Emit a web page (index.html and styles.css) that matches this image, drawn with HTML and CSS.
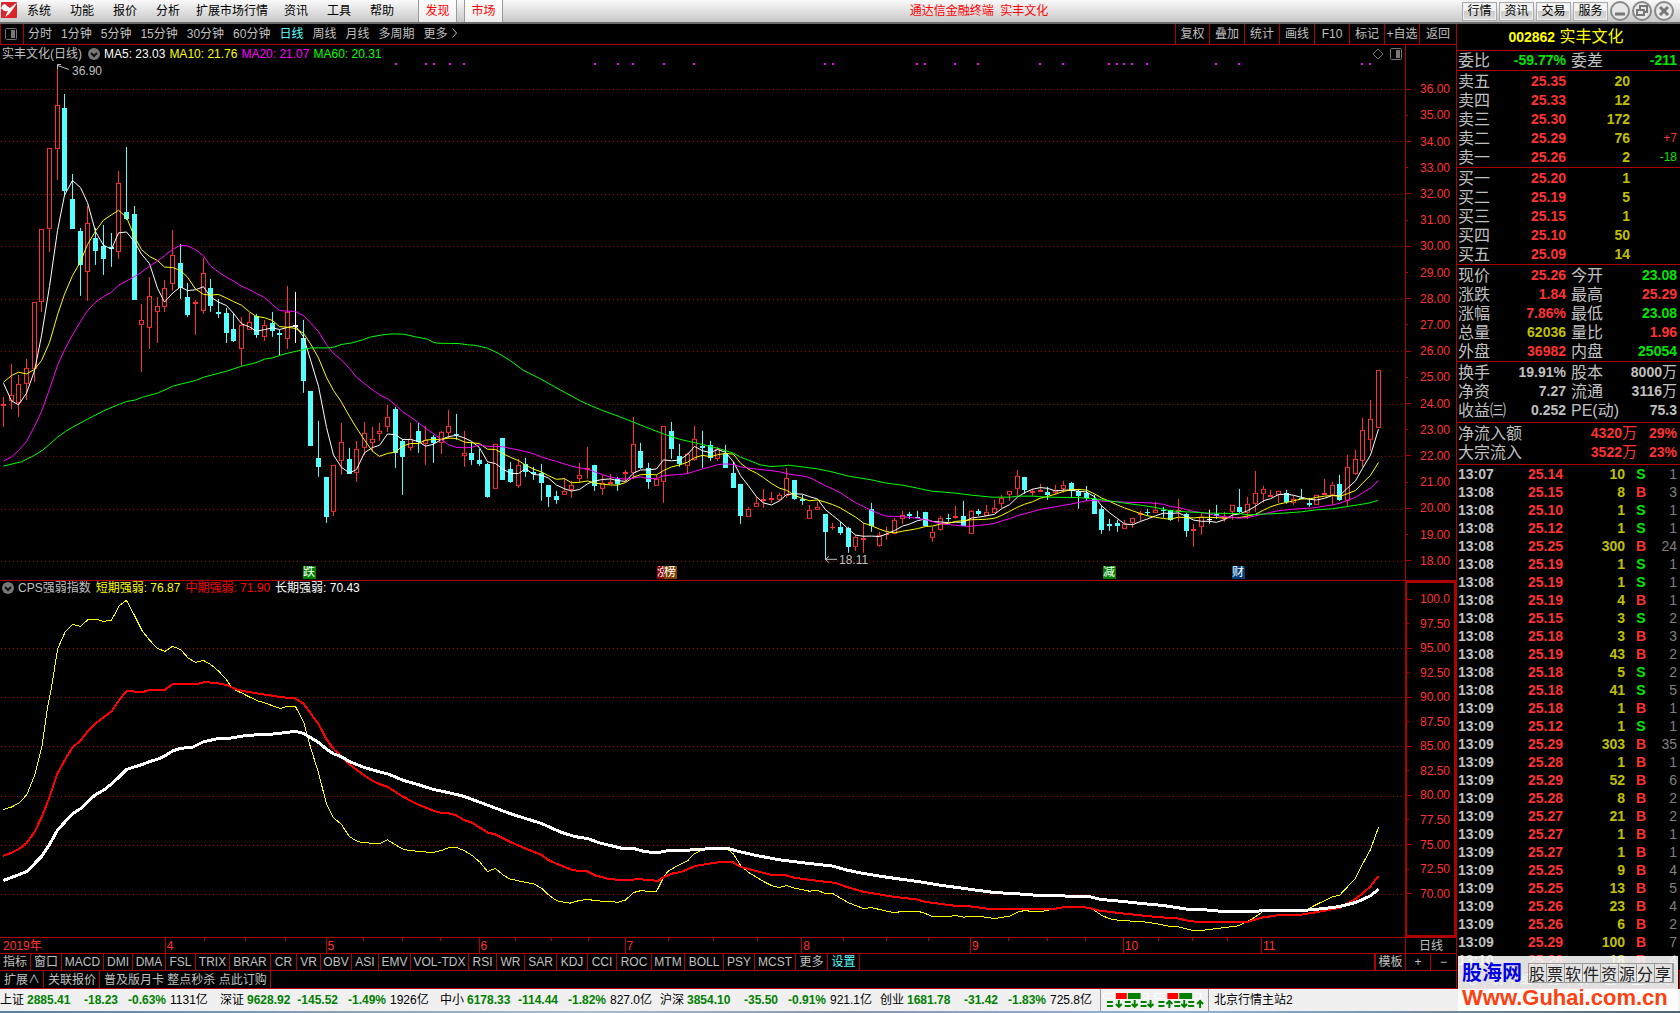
FILE: index.html
```html
<!DOCTYPE html>
<html lang="zh-CN">
<head>
<meta charset="utf-8">
<title>通达信金融终端 实丰文化</title>
<link rel="stylesheet" href="styles.css">
</head>
<body>
<div class="app">
  <header class="titlebar">
    <nav class="menu">
      <svg class="logo" viewBox="0 0 17 18"><rect x="1" y="2" width="16" height="16" rx="1" fill="#d8262c"/><path d="M1 9 Q2 4 5 4 L7 6 L10 8 L15 4 L17 3 L13 9 Q10 14 5 17 L8 11 Q4 12 2 9Z" fill="#fff"/></svg>
      <button>系统</button><button>功能</button><button>报价</button><button>分析</button><button>扩展市场行情</button><button>资讯</button><button>工具</button><button>帮助</button>
      <button class="hot">发现</button><button class="hot hot-last">市场</button>
    </nav>
    <h1 class="app-title">通达信金融终端&nbsp; 实丰文化</h1>
    <div class="window-tools">
      <button class="tool">行情</button><button class="tool">资讯</button><button class="tool">交易</button><button class="tool">服务</button>
      <button class="round" aria-label="最小化"><svg viewBox="0 0 20 20"><circle cx="10" cy="10" r="9"/><path d="M5 13h10" stroke-width="3"/></svg></button>
      <button class="round" aria-label="还原"><svg viewBox="0 0 20 20"><circle cx="10" cy="10" r="9"/><path d="M8 9V5h7v6h-3M5 9h7v5H5z" stroke-width="2"/></svg></button>
      <button class="round" aria-label="关闭"><svg viewBox="0 0 20 20"><circle cx="10" cy="10" r="9"/><path d="M6 6l8 8M14 6l-8 8" stroke-width="3"/></svg></button>
    </div>
  </header>

  <div class="workspace">
    <main class="charts">
      <div class="toolbar">
        <button class="pane-toggle" aria-label="侧栏"><svg viewBox="0 0 12 12"><rect x="0.5" y="0.5" width="11" height="11" rx="1" fill="none" stroke="#777"/><rect x="6" y="2" width="4" height="8" fill="#777"/></svg></button>
        <div class="periods">
          <button>分时</button><button>1分钟</button><button>5分钟</button><button>15分钟</button><button>30分钟</button><button>60分钟</button><button class="active">日线</button><button>周线</button><button>月线</button><button>多周期</button><button>更多 <svg class="chev" viewBox="0 0 5 10"><path d="M0.5 0.5L4.5 5L0.5 9.5" fill="none" stroke="#c0c0c0"/></svg></button>
        </div>
        <div class="chart-tools">
          <button>复权</button><button>叠加</button><button>统计</button><button>画线</button><button>F10</button><button>标记</button><button>+自选</button><button>返回</button>
        </div>
      </div>

      <section class="panel panel-main">
        <div class="plot">
          <svg id="candles" viewBox="0 0 1405 535" preserveAspectRatio="none"></svg>
          <p class="legend"><span>实丰文化(日线)</span><svg class="drop" viewBox="0 0 12 12"><circle cx="6" cy="6" r="6" fill="#777"/><path d="M3 5l3 3 3-3" fill="none" stroke="#111" stroke-width="2"/></svg><span class="white">MA5: 23.03</span><span class="yellow">MA10: 21.76</span><span class="magenta">MA20: 21.07</span><span class="lime">MA60: 20.31</span></p>
          <svg class="corner" viewBox="0 0 30 12"><path d="M1 6l5-5 5 5-5 5z" fill="none" stroke="#777"/><rect x="18.5" y="0.5" width="11" height="11" rx="1" fill="none" stroke="#777"/><rect x="24" y="2" width="4" height="8" fill="#777"/></svg>
          <span class="note note-high">36.90</span>
          <span class="note note-low">18.11</span>
          <span class="badge fall">跌</span><span class="badge rise">涨</span><span class="badge rank">榜</span><span class="badge cut">减</span><span class="badge fin">财</span>
        </div>
        <ol class="axis axis-price"><li>36.00</li><li>35.00</li><li>34.00</li><li>33.00</li><li>32.00</li><li>31.00</li><li>30.00</li><li>29.00</li><li>28.00</li><li>27.00</li><li>26.00</li><li>25.00</li><li>24.00</li><li>23.00</li><li>22.00</li><li>21.00</li><li>20.00</li><li>19.00</li><li>18.00</li></ol>
      </section>

      <section class="panel panel-sub">
        <div class="plot">
          <svg id="strength" viewBox="0 0 1405 356" preserveAspectRatio="none"></svg>
          <p class="legend legend-sub"><svg class="drop" viewBox="0 0 12 12"><circle cx="6" cy="6" r="6" fill="#777"/><path d="M3 5l3 3 3-3" fill="none" stroke="#111" stroke-width="2"/></svg><span>CPS强弱指数</span><span class="yellow">短期强弱: 76.87</span><span class="red">中期强弱: 71.90</span><span class="white">长期强弱: 70.43</span></p>
        </div>
        <ol class="axis axis-index"><li>100.0</li><li>97.50</li><li>95.00</li><li>92.50</li><li>90.00</li><li>87.50</li><li>85.00</li><li>82.50</li><li>80.00</li><li>77.50</li><li>75.00</li><li>72.50</li><li>70.00</li></ol>
      </section>

      <div class="dates">
        <div class="months">
          <svg id="minor" viewBox="0 0 1405 3" preserveAspectRatio="none"></svg>
          <span>2019年</span><span>4</span><span>5</span><span>6</span><span>7</span><span>8</span><span>9</span><span>10</span><span>11</span>
        </div>
        <div class="period-name">日线</div>
      </div>

      <div class="indicators">
        <div class="indicator-tabs">
          <button>指标</button><button>窗口</button><button>MACD</button><button>DMI</button><button>DMA</button><button>FSL</button><button>TRIX</button><button>BRAR</button><button>CR</button><button>VR</button><button>OBV</button><button>ASI</button><button>EMV</button><button>VOL-TDX</button><button>RSI</button><button>WR</button><button>SAR</button><button>KDJ</button><button>CCI</button><button>ROC</button><button>MTM</button><button>BOLL</button><button>PSY</button><button>MCST</button><button>更多</button><button class="active">设置</button>
        </div>
        <div class="zoomers"><button>模板</button><button>+</button><button>−</button></div>
      </div>
      <div class="extras"><button>扩展∧</button><button>关联报价</button><button>普及版月卡 整点秒杀 点此订购</button></div>
    </main>

    <aside class="quote">
      <h2 class="stock"><b>002862</b> 实丰文化</h2>
      <table class="stats ratio"><colgroup><col class="c-label"><col class="c-val"><col class="c-label2"><col></colgroup>
        <tr><th>委比</th><td class="g">-59.77%</td><th>委差</th><td class="g">-211</td></tr></table>
      <table class="book"><colgroup><col class="c-label"><col class="c-val"><col class="c-vol"><col></colgroup>
        <tr><th>卖五</th><td>25.35</td><td>20</td><td></td></tr>
        <tr><th>卖四</th><td>25.33</td><td>12</td><td></td></tr>
        <tr><th>卖三</th><td>25.30</td><td>172</td><td></td></tr>
        <tr><th>卖二</th><td>25.29</td><td>76</td><td class="delta r">+7</td></tr>
        <tr><th>卖一</th><td>25.26</td><td>2</td><td class="delta g">-18</td></tr></table>
      <table class="book"><colgroup><col class="c-label"><col class="c-val"><col class="c-vol"><col></colgroup>
        <tr><th>买一</th><td>25.20</td><td>1</td><td></td></tr>
        <tr><th>买二</th><td>25.19</td><td>5</td><td></td></tr>
        <tr><th>买三</th><td>25.15</td><td>1</td><td></td></tr>
        <tr><th>买四</th><td>25.10</td><td>50</td><td></td></tr>
        <tr><th>买五</th><td>25.09</td><td>14</td><td></td></tr></table>
      <table class="stats"><colgroup><col class="c-label"><col class="c-val"><col class="c-label2"><col></colgroup>
        <tr><th>现价</th><td class="r">25.26</td><th>今开</th><td class="g">23.08</td></tr>
        <tr><th>涨跌</th><td class="r">1.84</td><th>最高</th><td class="r">25.29</td></tr>
        <tr><th>涨幅</th><td class="r">7.86%</td><th>最低</th><td class="g">23.08</td></tr>
        <tr><th>总量</th><td class="y">62036</td><th>量比</th><td class="r">1.96</td></tr>
        <tr><th>外盘</th><td class="r">36982</td><th>内盘</th><td class="g">25054</td></tr></table>
      <table class="stats roomy"><colgroup><col class="c-label"><col class="c-val"><col class="c-label2"><col></colgroup>
        <tr><th>换手</th><td>19.91%</td><th>股本</th><td>8000<i>万</i></td></tr>
        <tr><th>净资</th><td>7.27</td><th>流通</th><td>3116<i>万</i></td></tr>
        <tr><th>收益㈢</th><td>0.252</td><th>PE(动)</th><td>75.3</td></tr></table>
      <table class="flow roomy"><colgroup><col class="c-flow"><col class="c-amount"><col></colgroup>
        <tr><th>净流入额</th><td>4320<i>万</i></td><td>29%</td></tr>
        <tr><th>大宗流入</th><td>3522<i>万</i></td><td>23%</td></tr></table>
      <div class="tape"><table class="ticks"><colgroup><col class="t-time"><col class="t-price"><col class="t-vol"><col class="t-side"><col></colgroup><tbody id="ticks"></tbody></table></div>
      <div class="side-tabs"><button>笔</button><button>价</button><button>细</button><button>势</button><button>联</button><button>值</button><button>主</button><button>筹</button></div>
    </aside>
  </div>

  <footer class="status">
    <div class="index"><span>上证</span><b>2885.41</b><b>-18.23</b><b>-0.63%</b><span>1131亿</span></div>
    <div class="index"><span>深证</span><b>9628.92</b><b>-145.52</b><b>-1.49%</b><span>1926亿</span></div>
    <div class="index"><span>中小</span><b>6178.33</b><b>-114.44</b><b>-1.82%</b><span>827.0亿</span></div>
    <div class="index"><span>沪深</span><b>3854.10</b><b>-35.50</b><b>-0.91%</b><span>921.1亿</span></div>
    <div class="index"><span>创业</span><b>1681.78</b><b>-31.42</b><b>-1.83%</b><span>725.8亿</span></div>
    <svg class="meters" viewBox="0 0 108 20"><g fill="none" stroke="#fff"><path d="M2.5 3.5h45v5h-45zM54.5 3.5h46v5h-46z"/></g><path d="M15 3h11v6H15zM67 3h11v6H67z" fill="#f00"/><path d="M27 3h13v6H27zM79 3h13v6H79z" fill="#008000"/>
      <g id="arrows" fill="none" stroke="#008000" stroke-width="2"><path d="M6 12h6M6 16h6M24 12h6M24 16h6M40 12h6M40 16h6M58 12h6M58 16h6M74 12h6M74 16h6M88 12h6M88 16h6"/><path d="M18 10v8M15 14l3 3 3-3M34 10v8M31 14l3 3 3-3M50 10v8M47 14l3 3 3-3M69 18v-8M66 14l3-3 3 3M84 10v8M81 14l3 3 3-3M100 18v-8M97 14l3-3 3 3"/></g></svg>
    <span class="host">北京行情主站2</span>
  </footer>
  <div class="taskbar"></div>

  <div class="brand">
    <strong class="brand-name">股海网</strong>
    <span class="brand-line"><i>股</i><i>票</i><i>软</i><i>件</i><i>资</i><i>源</i><i>分</i><i>享</i></span>
    <a class="brand-url" href="#">Www.Guhai.com.cn</a>
  </div>
</div>
<script src="chart.js"></script>
</body>
</html>
```
FILE: styles.css
```css
* { box-sizing: border-box; }
body {
  margin: 0;
  background: #000;
  color: #c0c0c0;
  font: 12px/16px "Liberation Sans", "Noto Sans CJK SC", sans-serif;
}
button {
  margin: 0;
  padding: 0;
  border: 0;
  background: none;
  color: inherit;
  font: inherit;
  white-space: nowrap;
}
svg { display: block; }
p, h1, h2, ol { margin: 0; padding: 0; font-weight: normal; list-style: none; }
.white { color: #fff; }
.yellow { color: #ff0; }
.magenta { color: #f0f; }
.lime { color: #0f0; }
.red { color: #f00; }

.app { position: relative; display: flex; flex-direction: column; height: 100vh; min-height: 900px; overflow: hidden; }

/* title bar */
.titlebar {
  display: grid;
  grid-template-columns: 501px 1fr 223px;
  height: 24px;
  border-bottom: 2px solid #6c6c6c;
  background: linear-gradient(#fafafa, #c8c8c8);
  color: #000;
}
.menu { display: grid; grid-template-columns: 17px 43px 43px 43px 40px 88px 43px 43px 58px 46px 39px; }
.logo { width: 17px; height: 18px; }
.menu button { padding-left: 10px; text-align: left; }
.menu .hot {
  padding: 0;
  margin-right: 7px;
  border: 1px solid #999;
  border-width: 0 1px;
  background: linear-gradient(#fff, #eee);
  color: #f00;
  text-align: center;
}
.menu .hot-last { margin-right: 0; }
.app-title { color: #f00; font-size: 12px; line-height: 22px; text-align: center; }
.window-tools { display: flex; align-items: center; gap: 2px; padding-left: 5px; }
.tool {
  width: 35px;
  height: 19px;
  border: 1px solid #aaa;
  outline: 1px solid #eee;
  outline-offset: -2px;
  background: linear-gradient(#f4f4f4 50%, #ccc 50%, #ddd);
}
.round { width: 20px; height: 20px; }
.round svg { width: 20px; height: 20px; fill: #e8e8e8; stroke: #888; stroke-width: 2; }
.round path { fill: none; stroke: #777; }

.workspace { display: flex; flex: 1; min-height: 0; }
.charts { display: flex; flex: 1; flex-direction: column; min-width: 0; }

/* period toolbar */
.toolbar { display: flex; height: 21px; border-bottom: 1px solid #b00000; }
.toolbar button { line-height: 20px; }
.pane-toggle { width: 24px; padding-left: 4px; border: 1px solid #b00000; border-width: 0 1px; }
.pane-toggle svg { width: 12px; height: 12px; }
.periods { display: flex; flex: 1; gap: 9px; padding-left: 4px; }
.chev { display: inline-block; width: 5px; height: 10px; margin-left: 1px; }
.active { color: #54ffff; }
.chart-tools { display: grid; grid-template-columns: 34px repeat(6, 35px) 37px; }
.chart-tools button { border-left: 1px solid #b00000; }

/* chart panels */
.panel { display: flex; min-height: 0; border-bottom: 1px solid #b00000; }
.panel-main { flex: 536 1 0; }
.panel-sub { flex: 357 1 0; }
.plot { position: relative; flex: 1; min-width: 0; }
.plot > svg:first-child { position: absolute; width: 100%; height: 100%; shape-rendering: crispEdges; }
.legend { position: absolute; top: 1px; left: 2px; display: flex; align-items: center; gap: 4px; }
.legend-sub { top: -1px; gap: 5px; }
.drop { width: 12px; height: 12px; margin-left: 2px; }
.legend-sub .drop { margin: 0 -1px 0 0; }
.corner { position: absolute; top: 3px; right: 3px; width: 30px; height: 12px; }
.note { position: absolute; }
.note-high { left: 72px; top: 18px; }
.note-low { left: 839px; top: 507px; }
.badge {
  position: absolute;
  bottom: 1px;
  width: 13px;
  height: 13px;
  overflow: hidden;
  color: #fff;
  font-size: 12px;
  line-height: 13px;
}
.fall { left: 303px; background: #008000; }
.rise { left: 657px; width: 7px; background: #900000; }
.rank { left: 664px; background: #804000; }
.cut { left: 1103px; background: #008000; }
.fin { left: 1232px; background: #003c78; }

.axis { display: flex; flex-direction: column; width: 51px; border-left: 1px solid #b00000; color: #ff3232; }
.axis li { display: flex; flex: 1; align-items: center; min-height: 0; }
.axis li::before { content: ""; width: 2px; height: 1px; margin-right: 12px; background: #b00000; }
.axis li:nth-child(odd)::before { width: 5px; margin-right: 9px; }
.axis-price { padding: 31px 0 6px; }
.axis-index { padding: 4px 0 29px; border: 2px solid #b00000; }
.axis-index li::before { margin-right: 11px; }
.axis-index li:nth-child(odd)::before { margin-right: 8px; }

/* time axis */
.dates { display: flex; height: 16px; border-bottom: 1px solid #b00000; color: #ff3232; }
.months { position: relative; display: flex; flex: 1; }
.months svg { position: absolute; width: 100%; height: 3px; }
.months span { flex: 153 1 0; padding-left: 1px; border-left: 1px solid #b00000; }
.months span:nth-of-type(1) { flex-grow: 164; padding-left: 3px; border-left: 0; }
.months span:nth-of-type(2) { flex-grow: 161; }
.months span:nth-of-type(4) { flex-grow: 146; }
.months span:nth-of-type(5) { flex-grow: 177; }
.months span:nth-of-type(6) { flex-grow: 169; }
.months span:nth-of-type(8) { flex-grow: 138; }
.months span:nth-of-type(9) { flex-grow: 144; }
.period-name { width: 51px; border-left: 1px solid #b00000; color: #c0c0c0; text-align: center; }

/* indicator tabs */
.indicators { display: flex; justify-content: space-between; height: 17px; border-bottom: 1px solid #b00000; }
.indicator-tabs {
  display: grid;
  grid-template-columns: 31px 31px 42px 29px 33px 30px 34px 41px 26px 24px 31px 27px 32px 58px 28px 28px 32px 31px 29px 35px 33px 39px 31px 41px 32px 32px;
}
.indicators button, .extras button { border-right: 1px solid #b00000; line-height: 16px; }
.zoomers { display: grid; grid-template-columns: 30px 25px 25px; border-left: 2px solid #b00000; }
.zoomers button:last-child { border-right: 0; }
.extras { display: flex; height: 18px; border-bottom: 1px solid #b00000; }
.extras button { padding: 0 3px 0 4px; }

/* quote column */
.quote { display: flex; flex-direction: column; width: 224px; border-left: 1px solid #b00000; overflow: hidden; font-size: 14px; }
.stock { height: 27px; padding-right: 5px; border-bottom: 1px solid #b00000; color: #ff0; font-size: 16px; line-height: 26px; text-align: center; }
.stock b { font-size: 14px; }
.quote table { width: 100%; table-layout: fixed; border-collapse: separate; border-spacing: 0; }
.quote > table { padding-top: 1px; border-bottom: 1px solid #b00000; }
.quote > .ratio { padding: 0; }
.quote > .roomy { padding: 1px 0 2px; }
.quote td, .quote th { height: 19px; padding: 0; line-height: 19px; white-space: nowrap; }
.quote th { padding-left: 1px; font-size: 16px; font-weight: normal; text-align: left; }
.quote td { font-weight: bold; text-align: right; }
.quote td:last-child { padding-right: 3px; }
.quote i { font-size: 15px; font-style: normal; font-weight: normal; line-height: 1; }
.c-label { width: 50px; }
.c-val { width: 59px; }
.c-label2 { width: 50px; }
.c-vol { width: 64px; }
.c-flow { width: 70px; }
.c-amount { width: 110px; }
.quote .stats th:nth-child(3) { padding-left: 5px; }
.book td:nth-child(2), .quote .r, .flow td { color: #ff3232; }
.book td:nth-child(3), .quote .y { color: #c0c000; }
.quote .g { color: #00e600; }
.quote .delta { font-size: 12px; font-weight: normal; }
.tape { flex: 1; min-height: 0; overflow: hidden; }
.quote .ticks td { height: 18px; line-height: 18px; }
.ticks td:nth-child(1) { text-align: left; }
.ticks td:nth-child(2) { color: #ff3232; }
.ticks td:nth-child(3) { color: #c0c000; }
.ticks td:nth-child(4) { text-align: center; }
.quote .ticks td:nth-child(1) { padding-left: 1px; }
.quote .ticks td:nth-child(5) { color: #808080; font-weight: normal; }
.t-time { width: 50px; }
.t-price { width: 56px; }
.t-vol { width: 62px; }
.t-side { width: 32px; }
.side-tabs { display: grid; grid-template-columns: repeat(8, 1fr); height: 19px; border: 1px solid #b00000; border-width: 1px 0; font-size: 12px; }
.side-tabs button { border-right: 1px solid #b00000; }

/* status line */
.status { display: flex; height: 22px; background: #f0f0f0; color: #000; line-height: 22px; white-space: nowrap; }
.index { display: grid; grid-template-columns: 27px 46px 45px 48px 54px; }
.index b { color: #008000; text-align: right; }
.index b:nth-child(2) { text-align: left; }
.index span:last-child { padding-left: 4px; }
.meters { width: 108px; height: 22px; border-left: 1px solid #999; }
.host { padding-left: 5px; border-left: 1px solid #999; }
.taskbar { height: 2px; background: linear-gradient(90deg, #5a7f9f, #a8bccc 35%, #8a94b0 50%, #93b6d6 70%, #4f6674); }

/* site plate over the lower right corner */
.brand {
  position: absolute;
  right: 2px;
  bottom: 2px;
  display: grid;
  grid-template-columns: 66px 1fr;
  align-items: center;
  width: 220px;
  height: 55px;
  padding: 4px 4px 0;
  background: rgba(255, 255, 255, 0.88);
}
.brand-name { color: #0000e0; font-size: 20px; line-height: 24px; }
.brand-line { display: grid; grid-template-columns: repeat(8, 18px); border: 1px solid #999; color: #222; font: 16px/18px "Noto Sans CJK SC", sans-serif; }
.brand-line i { border-right: 1px solid #999; font-style: normal; }
.brand-url { grid-column: 1 / 3; color: #ff4010; font-size: 22px; font-weight: bold; line-height: 24px; text-decoration: none; }
```
FILE: chart.js
```js
// Vertical values are stored in thirds of a pixel from the window's top.
const SUB = 3;
const STEP = 7.68;
const NS = 'http://www.w3.org/2000/svg';
const UP = '#ff3232', DOWN = '#54ffff', LINE = '#b00000';

function add(svg, name, attrs) {
  const el = document.createElementNS(NS, name);
  for (const key in attrs) el.setAttribute(key, attrs[key]);
  svg.appendChild(el);
}
const barX = i => Math.round(3 + STEP * i);

// kind, high, body top, body bottom, low
const bars = `R 1191 1212 1217 1281|R 1092 1186 1202 1227|R 1125 1153 1208 1250|R 1077 1105 1153 1200|R 907 907 1108 1145|R 688 688 907 935|R 445 445 688 755|R 195 316 448 540|C 282 324 573 588|C 522 597 686 686
C 684 693 795 887|R 618 670 817 902|C 684 714 752 795|C 675 738 776 825|C 699 742 746 801|R 513 550 755 776|C 441 636 657 660|C 618 642 899 899|R 912 961 976 1116|R 831 889 983 1047
R 891 919 937 1029|R 840 865 922 936|R 690 766 853 872|C 732 789 865 896|C 850 891 945 950|R 900 907 913 1005|R 773 820 932 942|C 837 864 918 936|C 896 936 942 954|C 924 939 999 1029
C 940 987 1022 1026|R 951 976 1046 1097|R 938 967 991 991|C 942 949 1005 1014|R 960 976 1012 1022|C 936 969 993 1011|C 990 999 1004 1067|R 858 935 1018 1046|W 876 975 981 1029|C 960 1014 1142 1178
C 1173 1173 1338 1338|C 1263 1374 1401 1431|C 1431 1431 1551 1569|R 1396 1396 1535 1548|R 1269 1327 1382 1425|C 1344 1377 1422 1422|R 1323 1348 1418 1446|R 1266 1300 1345 1365|R 1281 1318 1330 1355|R 1269 1294 1303 1323
R 1215 1252 1280 1297|C 1220 1227 1359 1404|C 1317 1323 1371 1485|R 1269 1318 1345 1353|C 1270 1293 1327 1359|R 1278 1320 1332 1395|C 1305 1311 1330 1389|R 1293 1297 1330 1362|R 1230 1279 1300 1317|C 1242 1302 1306 1320
R 1293 1360 1369 1401|C 1327 1359 1380 1395|C 1347 1380 1392 1397|C 1390 1392 1491 1494|R 1333 1333 1468 1468|C 1314 1314 1440 1440|C 1386 1407 1446 1449|R 1378 1396 1457 1464|C 1374 1392 1416 1431|C 1401 1416 1422 1440
C 1392 1420 1449 1503|C 1455 1455 1491 1521|C 1473 1488 1500 1512|R 1434 1472 1484 1484|R 1443 1456 1470 1494|R 1389 1426 1438 1450|R 1341 1405 1411 1437|C 1395 1395 1458 1473|R 1425 1450 1466 1485|R 1422 1447 1452 1452
C 1431 1436 1452 1473|R 1410 1416 1422 1445|R 1251 1333 1418 1438|C 1329 1353 1404 1408|C 1389 1404 1446 1467|R 1425 1438 1457 1457|R 1279 1279 1445 1509|C 1266 1293 1347 1377|C 1332 1368 1392 1401|R 1360 1363 1397 1422
R 1278 1318 1379 1383|C 1293 1338 1344 1404|C 1323 1335 1374 1383|R 1341 1346 1376 1383|C 1335 1359 1404 1404|C 1387 1419 1464 1464|C 1452 1452 1548 1572|R 1521 1528 1550 1550|R 1491 1510 1520 1520|R 1467 1497 1503 1524
R 1476 1494 1500 1509|R 1480 1486 1499 1504|R 1404 1435 1487 1494|C 1440 1440 1497 1500|C 1485 1497 1503 1515|R 1515 1531 1558 1558|R 1506 1522 1531 1531|C 1542 1542 1596 1680|R 1569 1581 1584 1590|C 1566 1581 1599 1605
C 1581 1584 1641 1659|R 1605 1612 1640 1653|R 1570 1614 1620 1659|C 1509 1527 1578 1596|R 1596 1606 1637 1641|R 1581 1603 1606 1620|R 1555 1561 1603 1603|R 1533 1546 1556 1572|C 1536 1541 1548 1557|C 1533 1551 1555 1555
C 1536 1536 1578 1578|R 1580 1597 1613 1626|R 1548 1555 1589 1593|C 1541 1553 1557 1566|R 1518 1548 1554 1558|C 1503 1548 1579 1579|R 1530 1534 1603 1603|C 1527 1533 1542 1548|R 1515 1537 1547 1547|R 1500 1525 1538 1538
R 1486 1495 1513 1525|R 1474 1474 1486 1503|R 1410 1429 1468 1492|C 1431 1431 1470 1482|R 1468 1473 1479 1488|R 1452 1470 1476 1476|C 1461 1476 1485 1500|R 1455 1470 1479 1485|R 1443 1456 1468 1479|C 1446 1450 1473 1491
C 1467 1473 1488 1527|C 1458 1479 1495 1503|C 1486 1498 1542 1542|C 1518 1527 1590 1602|C 1557 1573 1578 1593|C 1561 1568 1578 1596|R 1560 1573 1586 1586|R 1555 1555 1570 1584|R 1533 1540 1544 1563|C 1527 1536 1540 1548
R 1506 1531 1538 1538|C 1521 1530 1534 1554|C 1530 1530 1560 1563|R 1497 1531 1536 1566|C 1539 1542 1593 1611|R 1572 1586 1594 1641|R 1539 1552 1582 1605|W 1530 1556 1560 1572|C 1515 1543 1547 1557|R 1536 1552 1556 1566
R 1516 1516 1535 1560|C 1467 1521 1536 1538|R 1491 1513 1540 1557|R 1413 1480 1513 1536|R 1458 1468 1481 1510|R 1470 1486 1492 1492|R 1474 1474 1485 1509|C 1470 1479 1506 1512|R 1489 1498 1508 1515|C 1467 1494 1498 1498
C 1494 1509 1515 1521|R 1486 1486 1516 1516|R 1437 1480 1484 1484|R 1446 1456 1486 1515|C 1425 1452 1500 1503|R 1365 1402 1504 1518|R 1350 1378 1421 1425|R 1254 1291 1382 1401|R 1200 1258 1319 1353|R 1111 1111 1285 1285`
  .split(/[|\n]/).map(row => {
    const [kind, ...v] = row.trim().split(' ');
    return { kind, v: v.map(Number) };
  });

const candles = document.getElementById('candles');
const TOP = 45;
const toY = v => Math.round(v / SUB) - TOP;

function grid(svg, rows) {
  rows.forEach(y => add(svg, 'path', { d: `M1 ${y + 0.5}H1405`, stroke: LINE, 'stroke-dasharray': '1 3' }));
}
grid(candles, [44, 96, 149, 201, 254, 306, 359, 411, 464, 516]);

[395, 425, 433, 449, 463, 594, 617, 632, 663, 693, 824, 832, 916, 924, 954, 977, 1039, 1062, 1108, 1116, 1123, 1131, 1146, 1215, 1238, 1361, 1369]
  .forEach(x => add(candles, 'rect', { x, y: 18, width: 2, height: 2, fill: '#f0f' }));

bars.forEach(({ kind, v }, i) => {
  const x = barX(i);
  const [high, top, bottom, low] = v.map(toY);
  const color = kind === 'R' ? UP : kind === 'C' ? DOWN : '#fff';
  const h = Math.max(1, bottom - top);
  if (kind === 'R' && h > 2) {
    add(candles, 'path', { d: `M${x + 0.5} ${high}V${top}M${x + 0.5} ${bottom}V${low}`, stroke: color });
    add(candles, 'rect', { x: x - 1.5, y: top + 0.5, width: 4, height: h - 1, fill: 'none', stroke: color });
  } else {
    add(candles, 'path', { d: `M${x + 0.5} ${high}V${low}`, stroke: color });
    add(candles, 'rect', { x: x - 2, y: top, width: 5, height: h, fill: color });
  }
});

function polyline(svg, points, stroke, width = 1) {
  add(svg, 'polyline', { points: points.map(p => p.join(',')).join(' '), fill: 'none', stroke, 'stroke-width': width });
}
const closes = bars.map(b => (b.kind === 'R' ? b.v[1] : b.v[2]));
function average(n, lead, color) {
  const points = closes.map((_, i) => {
    const value = i < lead.length ? lead[i] : closes.slice(i - n + 1, i + 1).reduce((a, b) => a + b) / n;
    return [barX(i) + 0.5, value / SUB - TOP];
  });
  polyline(candles, points, color);
}

// Sampled curves: three tiles of 560px, horizontal samples at 2.8 per pixel.
function curve(tiles, top) {
  return tiles.flatMap((tile, n) => tile.trim().split(/\s+/).map(pair => {
    const [x, y] = pair.split(',').map(Number);
    return [n * 560 + x / 2.8, y / SUB - top];
  }));
}

average(5, [1150, 1203, 1215, 1180], '#fff');
average(10, [1147, 1127, 1117, 1122, 1109, 1082, 1028, 945, 883], '#ff0');
average(20, [1384, 1371, 1352, 1325, 1280, 1235, 1168, 1097, 1050, 1005, 965, 932, 907, 890, 877, 856, 843, 830, 817], '#f0f');
polyline(candles, curve([
  '9,1399 32,1393 60,1386 97,1366 118,1352 139,1333 161,1312 183,1295 203,1282 247,1257 290,1233 334,1213 354,1205 377,1201 399,1192 440,1180 462,1170 483,1159 505,1153 547,1142 570,1132 634,1114 677,1099 721,1087 740,1078 763,1074 785,1066 805,1060 850,1049 870,1044 920,1044 937,1041 955,1034 985,1029 1015,1020 1035,1012 1070,1005 1100,1002 1132,1003 1160,1010 1197,1018 1215,1028 1225,1030 1285,1031 1310,1035 1330,1036 1365,1045 1395,1060 1430,1083 1465,1111 1510,1135 1565,1168',
  '55,1202 77,1213 119,1232 163,1249 206,1267 248,1285 292,1303 334,1318 399,1334 441,1345 486,1360 505,1372 528,1381 560,1395 590,1400 625,1398 640,1396 721,1407 765,1417 808,1429 872,1440 914,1450 959,1456 1001,1465 1040,1474 1100,1479 1152,1486 1210,1492 1260,1492 1280,1489 1325,1489 1365,1492 1445,1493 1490,1496 1565,1507',
  '0,1508 57,1516 99,1523 141,1533 186,1536 250,1540 334,1541 357,1545 399,1543 444,1541 508,1536 550,1530 595,1527 637,1520 679,1513 700,1509 722,1502'
], TOP), '#0f0');
add(candles, 'path', { d: 'M57.5 20.5L69 24.5M57.5 24V19.5H61M825.5 514.5H837M829 511.5L825.5 514.5L829 518', fill: 'none', stroke: '#c0c0c0' });

const strength = document.getElementById('strength');
const SUB_TOP = 581;
grid(strength, [67, 116, 165, 215, 264, 313]);
polyline(strength, curve([
  '9,2428 32,2421 54,2408 75,2384 97,2325 118,2235 132,2130 147,2045 161,1948 183,1894 203,1873 225,1879 247,1858 270,1858 290,1864 312,1861 334,1817 354,1801 377,1847 399,1894 418,1919 440,1945 462,1954 483,1939 505,1948 527,1974 547,1987 570,1981 592,1995 612,2013 635,2040 650,2064 663,2072 677,2079 699,2091 721,2102 740,2108 763,2117 785,2125 805,2119 827,2119 850,2165 869,2240 892,2319 914,2411 934,2453 956,2473 979,2510 1001,2524 1020,2528 1065,2530 1085,2519 1107,2534 1130,2548 1172,2554 1214,2557 1236,2551 1258,2542 1278,2542 1300,2551 1323,2567 1343,2585 1365,2614 1387,2605 1407,2623 1426,2636 1452,2642 1494,2651 1516,2664 1536,2684 1558,2701',
  '0,2704 28,2709 54,2701 77,2698 115,2703 163,2706 183,2700 206,2677 228,2671 248,2674 270,2674 292,2628 302,2614 320,2602 357,2582 377,2560 399,2549 470,2548 486,2562 505,2595 528,2617 570,2644 592,2656 614,2662 634,2656 657,2664 698,2673 721,2671 743,2680 765,2681 808,2708 850,2725 872,2722 914,2733 936,2737 959,2734 1005,2734 1023,2740 1043,2749 1088,2749 1107,2746 1130,2751 1152,2748 1194,2751 1216,2755 1258,2748 1281,2736 1301,2731 1323,2734 1350,2734 1375,2728 1410,2720 1474,2722 1496,2730 1516,2745 1539,2756',
  '0,2761 60,2764 99,2770 141,2779 163,2780 200,2790 235,2790 270,2785 330,2777 357,2764 379,2750 399,2735 463,2732 520,2730 550,2713 595,2690 615,2685 659,2635 679,2592 701,2549 724,2481'
], SUB_TOP), '#ff0');
polyline(strength, curve([
  '9,2567 32,2558 54,2546 75,2528 97,2495 118,2448 139,2390 161,2320 183,2277 203,2242 225,2222 247,2192 267,2170 290,2152 312,2134 334,2100 354,2073 399,2076 420,2070 462,2069 483,2052 550,2052 575,2046 612,2050 635,2055 660,2067 680,2073 721,2080 785,2091 827,2095 850,2111 870,2140 892,2172 914,2217 934,2247 956,2269 979,2293 1020,2326 1043,2342 1065,2353 1085,2360 1130,2391 1172,2414 1214,2432 1236,2438 1258,2440 1278,2446 1300,2460 1323,2468 1343,2482 1365,2497 1387,2503 1430,2526 1471,2545 1516,2564 1536,2580 1566,2594',
  '35,2610 77,2614 99,2626 140,2637 185,2640 220,2637 275,2642 292,2630 315,2620 340,2615 377,2598 430,2588 465,2584 486,2587 505,2600 540,2610 592,2624 634,2626 657,2633 721,2642 770,2648 808,2662 850,2675 936,2690 1000,2698 1023,2705 1107,2717 1152,2719 1200,2726 1281,2726 1390,2725 1410,2721 1475,2722 1510,2731',
  '0,2739 99,2750 163,2755 195,2763 235,2766 357,2765 399,2752 444,2745 510,2743 550,2736 615,2723 637,2710 659,2697 679,2680 701,2659 724,2627'
], SUB_TOP), '#f00', 2);
polyline(strength, curve([
  '9,2641 32,2632 75,2614 97,2590 118,2567 139,2532 161,2490 183,2464 203,2441 225,2426 247,2403 267,2384 290,2370 312,2352 334,2330 354,2308 399,2293 420,2284 440,2278 462,2267 483,2253 505,2245 540,2241 570,2225 612,2215 640,2215 690,2206 763,2202 827,2194 850,2200 870,2213 892,2227 914,2247 934,2261 956,2270 979,2285 1020,2302 1065,2316 1085,2321 1130,2341 1172,2354 1214,2368 1258,2378 1300,2389 1365,2415 1430,2441 1516,2470 1568,2495',
  '40,2509 80,2516 110,2528 175,2545 210,2546 235,2554 270,2558 305,2551 350,2551 390,2547 430,2546 475,2546 500,2554 550,2566 614,2579 698,2590 765,2598 800,2609 850,2620 914,2631 1001,2644 1065,2655 1152,2668 1216,2677 1281,2681 1345,2686 1410,2687 1432,2690 1485,2690 1515,2698',
  '0,2703 70,2711 121,2716 195,2728 240,2729 290,2734 380,2734 400,2731 520,2730 572,2725 615,2719 659,2707 679,2698 701,2687 724,2667'
], SUB_TOP), '#fff', 3);

const minor = document.getElementById('minor');
[204, 245, 285, 363, 402, 440, 515, 551, 588, 668, 713, 757, 843, 886, 928, 1008, 1047, 1085, 1158, 1192, 1227]
  .forEach(x => add(minor, 'rect', { x, y: 0, width: 1, height: 3, fill: LINE }));

const ticks = `13:07 25.14 10 S 1|13:08 25.15 8 B 3|13:08 25.10 1 S 1|13:08 25.12 1 S 1|13:08 25.25 300 B 24|13:08 25.19 1 S 1|13:08 25.19 1 S 1|13:08 25.19 4 B 1|13:08 25.15 3 S 2|13:08 25.18 3 B 3|13:08 25.19 43 B 2|13:08 25.18 5 S 2|13:08 25.18 41 S 5|13:09 25.18 1 B 1|13:09 25.12 1 S 1|13:09 25.29 303 B 35|13:09 25.28 1 B 1|13:09 25.29 52 B 6|13:09 25.28 8 B 2|13:09 25.27 21 B 2|13:09 25.27 1 B 1|13:09 25.27 1 B 1|13:09 25.25 9 B 4|13:09 25.25 13 B 5|13:09 25.26 23 B 4|13:09 25.26 6 B 2|13:09 25.29 100 B 7|13:10 25.26 18 B 4`;
const body = document.getElementById('ticks');
ticks.split('|').forEach(line => {
  const row = body.insertRow();
  line.split(' ').forEach((text, i) => {
    const cell = row.insertCell();
    cell.textContent = text;
    if (i === 3) cell.className = text === 'B' ? 'r' : 'g';
  });
});
```
